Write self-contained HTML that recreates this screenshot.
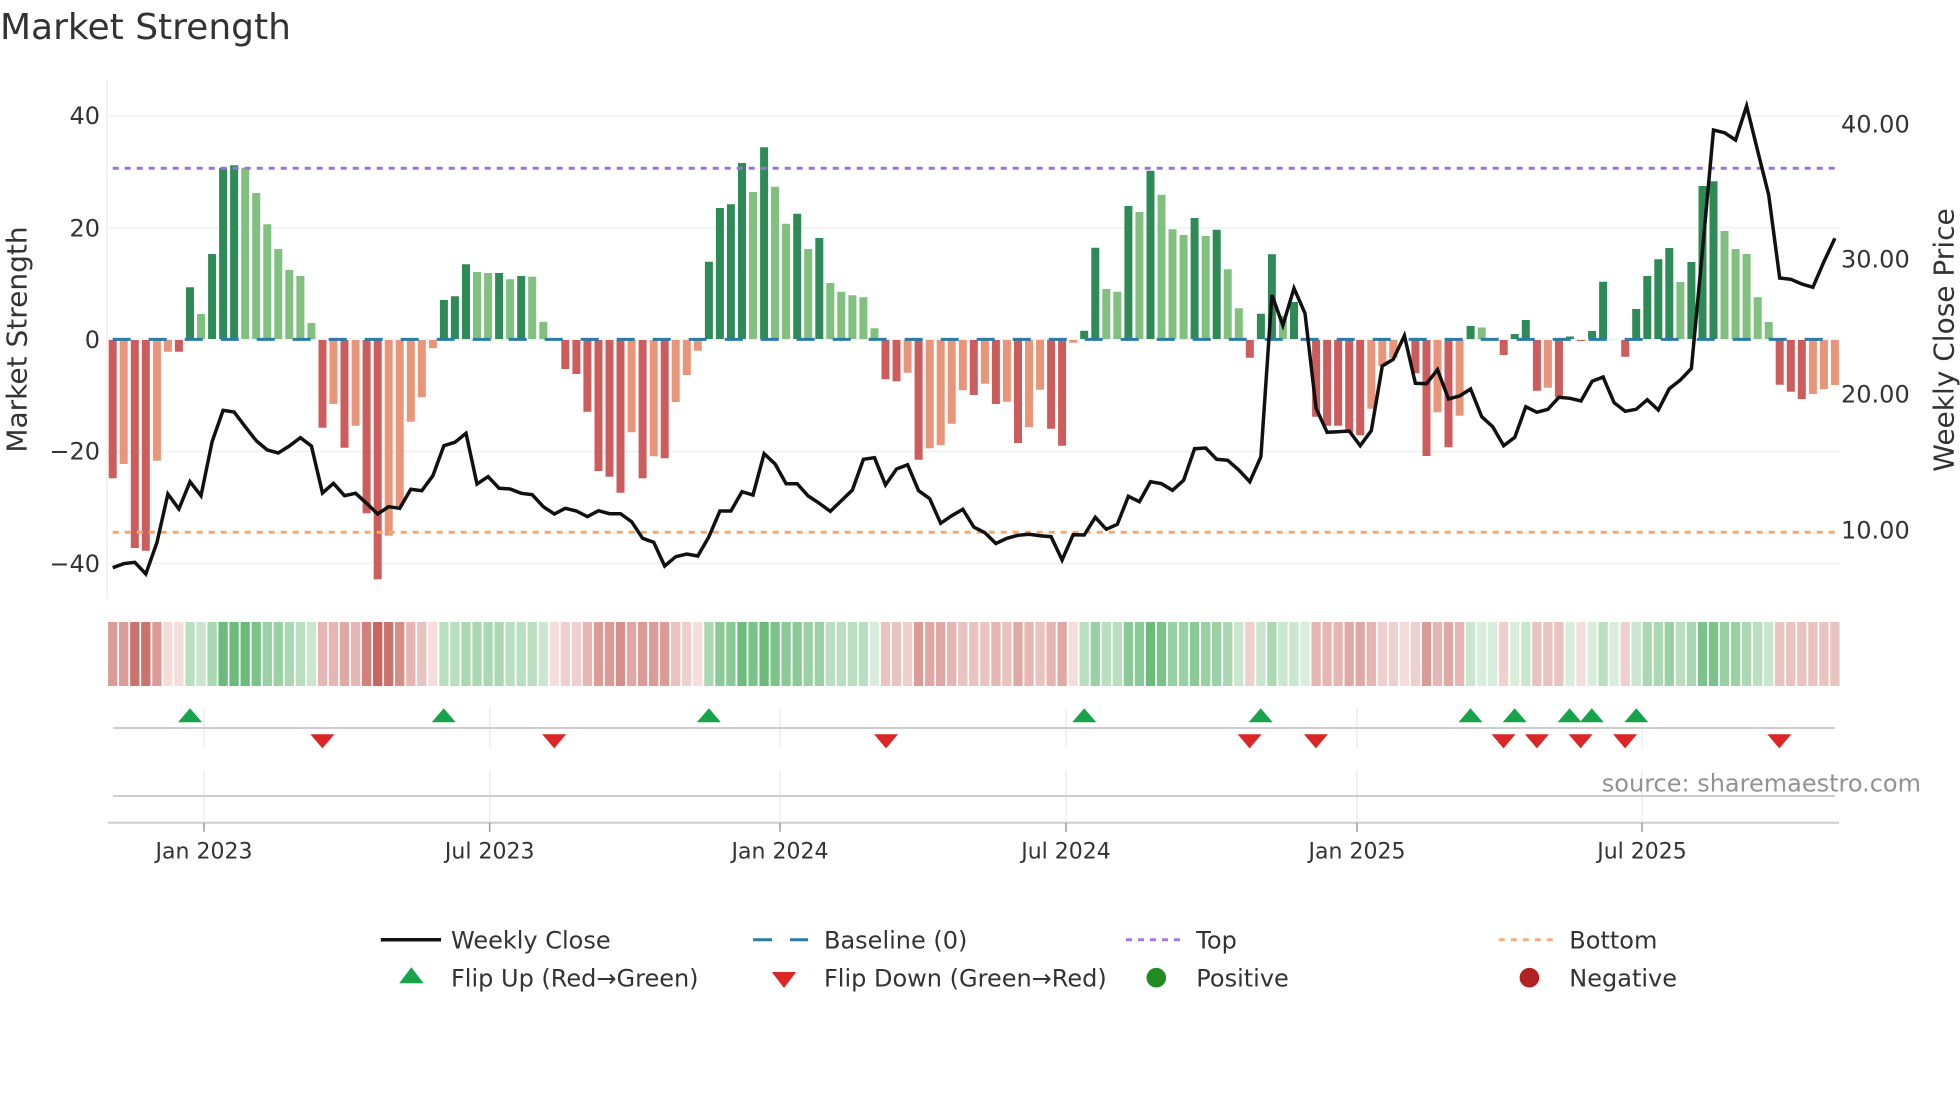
<!DOCTYPE html>
<html lang="en"><head><meta charset="utf-8"><title>Market Strength</title>
<style>
html,body{margin:0;padding:0;background:#fff;width:1960px;height:1102px;overflow:hidden}
svg{display:block;font-family:"DejaVu Sans","Liberation Sans",sans-serif}
text{fill:#333}
.t{font-size:24px}
.x{font-size:22px;text-anchor:middle}
.e{text-anchor:end}
.h path{stroke-width:9.3;fill:none}
.r0,.r1,.r2,.r3,.r4,.r5,.r6,.r7,.r8,.r9{stroke:#c35851}
.g0,.g1,.g2,.g3,.g4,.g5,.g6,.g7,.g8,.g9{stroke:#3da750}
.r0,.g0{stroke-opacity:.2}.r1,.g1{stroke-opacity:.28}.r2,.g2{stroke-opacity:.36}.r3,.g3{stroke-opacity:.44}.r4,.g4{stroke-opacity:.52}
.r5,.g5{stroke-opacity:.6}.r6,.g6{stroke-opacity:.68}.r7,.g7{stroke-opacity:.76}.r8,.g8{stroke-opacity:.84}.r9,.g9{stroke-opacity:.92}
</style></head><body>
<svg width="1960" height="1102" viewBox="0 0 1960 1102" xmlns="http://www.w3.org/2000/svg">
<rect width="1960" height="1102" fill="#fff"/>
<text x="0" y="39" style="font-size:36px">Market Strength</text>

<!-- grid -->
<path d="M107 80V599" stroke="#eeeef0" stroke-width="1.6" fill="none"/>
<path d="M107 115.7H1840M107 227.7H1840M107 339.5H1840M107 451.5H1840M107 563.5H1840" stroke="#f0f1f4" stroke-width="1.7" fill="none"/>

<!-- bars -->
<g fill="none" stroke-width="8">
<path stroke="#2e8b57" d="M190 339V287.3M212.1 339V254M223.1 339V167.7M234.1 339V165.3M443.9 339V300M454.9 339V296.3M466 339V264.3M499.1 339V273M521.2 339V276M708.9 339V261.7M719.9 339V208M730.9 339V204.3M742 339V163M764.1 339V147.3M797.2 339V213.7M819.3 339V238M1084.2 339V330.7M1095.3 339V247.7M1128.4 339V206M1150.5 339V170.7M1194.6 339V218M1216.7 339V229.7M1260.9 339V313.7M1271.9 339V254.3M1294 339V302M1470.6 339V326M1514.8 339V334M1525.8 339V320M1570 339V336.5M1592.1 339V331M1603.1 339V281.7M1636.2 339V309M1647.3 339V276M1658.3 339V259.3M1669.3 339V248M1691.4 339V262M1702.5 339V186M1713.5 339V181.3"/>
<path stroke="#81c07f" d="M201 339V314M245.2 339V167.7M256.2 339V193M267.3 339V224.3M278.3 339V249M289.3 339V270M300.4 339V276M311.4 339V323M477 339V272M488.1 339V273M510.1 339V279.3M532.2 339V276.7M543.3 339V321.7M753 339V192M775.1 339V186.7M786.1 339V223.7M808.2 339V249M830.3 339V283M841.3 339V291.7M852.4 339V295.3M863.4 339V297.3M874.5 339V328.3M1106.3 339V289M1117.3 339V291.7M1139.4 339V212M1161.5 339V194.7M1172.5 339V229.3M1183.6 339V235M1205.7 339V236M1227.7 339V269.3M1238.8 339V308.3M1282.9 339V315.7M1481.7 339V327.5M1680.4 339V282M1724.5 339V231M1735.6 339V249M1746.6 339V254M1757.7 339V297.3M1768.7 339V322"/>
<path stroke="#cd5c5c" d="M112.7 340V478.3M134.8 340V548M145.8 340V550.7M178.9 340V351.7M322.5 340V427.7M344.5 340V447.7M366.6 340V513.3M377.7 340V579.3M565.3 340V369M576.4 340V374M587.4 340V411.7M598.5 340V471M609.5 340V476.7M620.5 340V492.7M642.6 340V478.3M664.7 340V458.3M885.5 340V379.3M896.5 340V381.3M918.6 340V459.7M973.8 340V395M995.9 340V404M1018 340V443M1051.1 340V428.7M1062.1 340V445.7M1249.8 340V357.7M1316.1 340V416.7M1327.1 340V425.7M1338.1 340V425.7M1349.2 340V433M1360.2 340V435.3M1415.4 340V373.3M1426.5 340V456M1448.5 340V447.3M1503.7 340V355M1536.9 340V390.7M1558.9 340V397.3M1581 340V341M1625.2 340V356.7M1779.7 340V384.7M1790.8 340V391.7M1801.8 340V399"/>
<path stroke="#e8957a" d="M123.7 340V464M156.9 340V460.7M167.9 340V351.7M333.5 340V404M355.6 340V425.7M388.7 340V535.7M399.7 340V506M410.8 340V421.7M421.8 340V397.3M432.9 340V348.3M631.6 340V432.3M653.7 340V456.3M675.7 340V402M686.8 340V375M697.8 340V350.7M907.6 340V372.7M929.7 340V448.3M940.7 340V445.3M951.7 340V423.7M962.8 340V390.3M984.9 340V383.7M1006.9 340V401.7M1029 340V427.3M1040.1 340V389.7M1073.2 340V342.7M1371.3 340V408.7M1382.3 340V366M1393.3 340V358M1437.5 340V412.3M1459.6 340V415.7M1547.9 340V387.7M1812.9 340V394M1823.9 340V389M1834.9 340V385"/>
</g>

<!-- reference lines -->
<g fill="none" stroke-width="3">
<path d="M112.7 339.4H1835" stroke="#2a7ba8" stroke-dasharray="18 18"/>
<path d="M112.7 168.3H1835" stroke="#9b72d9" stroke-dasharray="6 6"/>
<path d="M112.7 532.3H1835" stroke="#f2a96b" stroke-dasharray="6 6"/>
</g>

<!-- weekly close -->
<polyline fill="none" stroke="#111" stroke-width="3.5" stroke-linejoin="miter" stroke-miterlimit="4" points="112.7,567.7 123.7,563.7 134.8,562.3 145.8,574 156.9,542.7 167.9,494 178.9,509 190,481.7 201,495.7 212.1,441.7 223.1,410.3 234.1,412 245.2,426.7 256.2,440.7 267.3,450 278.3,453 289.3,446 300.4,437.7 311.4,446 322.5,493 333.5,483.3 344.5,495.7 355.6,493.3 366.6,503.3 377.7,514 388.7,506.7 399.7,508.3 410.8,489.3 421.8,490.7 432.9,475.7 443.9,445.7 454.9,442.3 466,433.3 477,484 488.1,476.7 499.1,488.3 510.1,489 521.2,493.3 532.2,494.7 543.3,506.7 554.3,514 565.3,508.3 576.4,511 587.4,516.7 598.5,510.7 609.5,513.7 620.5,513.7 631.6,521.7 642.6,538.3 653.7,542.3 664.7,566 675.7,556.7 686.8,554 697.8,556 708.9,536.7 719.9,511 730.9,511 742,491.7 753,495 764.1,453.7 775.1,464 786.1,483.7 797.2,483.7 808.2,496 819.3,503.3 830.3,511.3 841.3,500.7 852.4,490 863.4,459.3 874.5,457.7 885.5,485 896.5,469 907.6,464.7 918.6,490.7 929.7,498.7 940.7,523.3 951.7,515.7 962.8,509.3 973.8,527 984.9,532.7 995.9,543.5 1006.9,538.3 1018,535.3 1029,534.3 1040.1,535.7 1051.1,536.7 1062.1,560 1073.2,534.7 1084.2,535 1095.3,517.3 1106.3,529.3 1117.3,524.3 1128.4,496.3 1139.4,501.7 1150.5,481.7 1161.5,483.7 1172.5,490.3 1183.6,480.3 1194.6,448.7 1205.7,448 1216.7,459.3 1227.7,460.3 1238.8,470 1249.8,481.7 1260.9,456.7 1271.9,295 1282.9,325.3 1294,288.3 1305,313.3 1316.1,408.3 1327.1,432.3 1338.1,431.7 1349.2,431 1360.2,445.7 1371.3,430.7 1382.3,366 1393.3,359.3 1404.4,335.7 1415.4,383.3 1426.5,383.7 1437.5,369.7 1448.5,399 1459.6,396 1470.6,389 1481.7,416.7 1492.7,426.7 1503.7,445.7 1514.8,437.3 1525.8,406.7 1536.9,412.3 1547.9,409.3 1558.9,397.3 1570,398.3 1581,401 1592.1,381.3 1603.1,377 1614.1,402.7 1625.2,411.3 1636.2,409.3 1647.3,399.7 1658.3,410 1669.3,388.7 1680.4,380 1691.4,368.5 1702.5,250 1713.5,130 1724.5,132.7 1735.6,140 1746.6,106 1757.7,151 1768.7,195 1779.7,278 1790.8,279.3 1801.8,284 1812.9,287.3 1823.9,261.7 1834.9,238.3"/>

<!-- y axis labels -->
<text class="t e" x="100" y="124">40</text>
<text class="t e" x="100" y="236.7">20</text>
<text class="t e" x="100" y="348">0</text>
<text class="t e" x="100" y="459.3">−20</text>
<text class="t e" x="100" y="572">−40</text>
<text class="t" x="1841" y="132.7">40.00</text>
<text class="t" x="1841" y="267.7">30.00</text>
<text class="t" x="1841" y="402.7">20.00</text>
<text class="t" x="1841" y="538.3">10.00</text>
<text transform="translate(26.7 339.5) rotate(-90)" text-anchor="middle" style="font-size:28px">Market Strength</text>
<text transform="translate(1953.3 340) rotate(-90)" text-anchor="middle" style="font-size:28px">Weekly Close Price</text>

<!-- heat strip -->
<g class="h">
<path class="r5" d="M112.7 622v64"/><path class="r5" d="M123.7 622v64"/><path class="r8" d="M134.8 622v64"/><path class="r8" d="M145.8 622v64"/><path class="r5" d="M156.9 622v64"/><path class="r0" d="M167.9 622v64"/><path class="r0" d="M178.9 622v64"/><path class="g2" d="M190 622v64"/><path class="g1" d="M201 622v64"/><path class="g3" d="M212.1 622v64"/><path class="g7" d="M223.1 622v64"/><path class="g7" d="M234.1 622v64"/><path class="g7" d="M245.2 622v64"/><path class="g6" d="M256.2 622v64"/><path class="g4" d="M267.3 622v64"/><path class="g4" d="M278.3 622v64"/><path class="g3" d="M289.3 622v64"/><path class="g2" d="M300.4 622v64"/><path class="g1" d="M311.4 622v64"/><path class="r3" d="M322.5 622v64"/><path class="r3" d="M333.5 622v64"/><path class="r4" d="M344.5 622v64"/><path class="r3" d="M355.6 622v64"/><path class="r7" d="M366.6 622v64"/><path class="r9" d="M377.7 622v64"/><path class="r8" d="M388.7 622v64"/><path class="r6" d="M399.7 622v64"/><path class="r3" d="M410.8 622v64"/><path class="r2" d="M421.8 622v64"/><path class="r0" d="M432.9 622v64"/><path class="g2" d="M443.9 622v64"/><path class="g2" d="M454.9 622v64"/><path class="g3" d="M466 622v64"/><path class="g3" d="M477 622v64"/><path class="g3" d="M488.1 622v64"/><path class="g3" d="M499.1 622v64"/><path class="g2" d="M510.1 622v64"/><path class="g2" d="M521.2 622v64"/><path class="g2" d="M532.2 622v64"/><path class="g1" d="M543.3 622v64"/><path class="r0" d="M554.3 622v64"/><path class="r1" d="M565.3 622v64"/><path class="r1" d="M576.4 622v64"/><path class="r3" d="M587.4 622v64"/><path class="r5" d="M598.5 622v64"/><path class="r5" d="M609.5 622v64"/><path class="r6" d="M620.5 622v64"/><path class="r4" d="M631.6 622v64"/><path class="r5" d="M642.6 622v64"/><path class="r5" d="M653.7 622v64"/><path class="r5" d="M664.7 622v64"/><path class="r2" d="M675.7 622v64"/><path class="r1" d="M686.8 622v64"/><path class="r0" d="M697.8 622v64"/><path class="g3" d="M708.9 622v64"/><path class="g5" d="M719.9 622v64"/><path class="g5" d="M730.9 622v64"/><path class="g7" d="M742 622v64"/><path class="g6" d="M753 622v64"/><path class="g7" d="M764.1 622v64"/><path class="g6" d="M775.1 622v64"/><path class="g5" d="M786.1 622v64"/><path class="g5" d="M797.2 622v64"/><path class="g4" d="M808.2 622v64"/><path class="g4" d="M819.3 622v64"/><path class="g2" d="M830.3 622v64"/><path class="g2" d="M841.3 622v64"/><path class="g2" d="M852.4 622v64"/><path class="g2" d="M863.4 622v64"/><path class="g0" d="M874.5 622v64"/><path class="r2" d="M885.5 622v64"/><path class="r2" d="M896.5 622v64"/><path class="r1" d="M907.6 622v64"/><path class="r5" d="M918.6 622v64"/><path class="r4" d="M929.7 622v64"/><path class="r4" d="M940.7 622v64"/><path class="r3" d="M951.7 622v64"/><path class="r2" d="M962.8 622v64"/><path class="r2" d="M973.8 622v64"/><path class="r2" d="M984.9 622v64"/><path class="r3" d="M995.9 622v64"/><path class="r2" d="M1006.9 622v64"/><path class="r4" d="M1018 622v64"/><path class="r3" d="M1029 622v64"/><path class="r2" d="M1040.1 622v64"/><path class="r3" d="M1051.1 622v64"/><path class="r4" d="M1062.1 622v64"/><path class="r0" d="M1073.2 622v64"/><path class="g2" d="M1084.2 622v64"/><path class="g4" d="M1095.3 622v64"/><path class="g2" d="M1106.3 622v64"/><path class="g2" d="M1117.3 622v64"/><path class="g5" d="M1128.4 622v64"/><path class="g5" d="M1139.4 622v64"/><path class="g7" d="M1150.5 622v64"/><path class="g6" d="M1161.5 622v64"/><path class="g4" d="M1172.5 622v64"/><path class="g4" d="M1183.6 622v64"/><path class="g5" d="M1194.6 622v64"/><path class="g4" d="M1205.7 622v64"/><path class="g4" d="M1216.7 622v64"/><path class="g3" d="M1227.7 622v64"/><path class="g1" d="M1238.8 622v64"/><path class="r1" d="M1249.8 622v64"/><path class="g1" d="M1260.9 622v64"/><path class="g3" d="M1271.9 622v64"/><path class="g1" d="M1282.9 622v64"/><path class="g1" d="M1294 622v64"/><path class="g0" d="M1305 622v64"/><path class="r3" d="M1316.1 622v64"/><path class="r3" d="M1327.1 622v64"/><path class="r3" d="M1338.1 622v64"/><path class="r4" d="M1349.2 622v64"/><path class="r4" d="M1360.2 622v64"/><path class="r3" d="M1371.3 622v64"/><path class="r1" d="M1382.3 622v64"/><path class="r1" d="M1393.3 622v64"/><path class="r0" d="M1404.4 622v64"/><path class="r1" d="M1415.4 622v64"/><path class="r5" d="M1426.5 622v64"/><path class="r3" d="M1437.5 622v64"/><path class="r4" d="M1448.5 622v64"/><path class="r3" d="M1459.6 622v64"/><path class="g1" d="M1470.6 622v64"/><path class="g0" d="M1481.7 622v64"/><path class="g0" d="M1492.7 622v64"/><path class="r1" d="M1503.7 622v64"/><path class="g0" d="M1514.8 622v64"/><path class="g1" d="M1525.8 622v64"/><path class="r2" d="M1536.9 622v64"/><path class="r2" d="M1547.9 622v64"/><path class="r2" d="M1558.9 622v64"/><path class="g0" d="M1570 622v64"/><path class="r0" d="M1581 622v64"/><path class="g0" d="M1592.1 622v64"/><path class="g2" d="M1603.1 622v64"/><path class="g0" d="M1614.1 622v64"/><path class="r1" d="M1625.2 622v64"/><path class="g1" d="M1636.2 622v64"/><path class="g3" d="M1647.3 622v64"/><path class="g3" d="M1658.3 622v64"/><path class="g4" d="M1669.3 622v64"/><path class="g2" d="M1680.4 622v64"/><path class="g3" d="M1691.4 622v64"/><path class="g6" d="M1702.5 622v64"/><path class="g6" d="M1713.5 622v64"/><path class="g4" d="M1724.5 622v64"/><path class="g4" d="M1735.6 622v64"/><path class="g3" d="M1746.6 622v64"/><path class="g2" d="M1757.7 622v64"/><path class="g1" d="M1768.7 622v64"/><path class="r2" d="M1779.7 622v64"/><path class="r2" d="M1790.8 622v64"/><path class="r2" d="M1801.8 622v64"/><path class="r2" d="M1812.9 622v64"/><path class="r2" d="M1823.9 622v64"/><path class="r2" d="M1834.9 622v64"/>
</g>

<!-- lower panels -->
<path d="M204 708V747.7M489.7 708V747.7M780 708V747.7M1066 708V747.7M1357 708V747.7M1642 708V747.7M204 770V822.7M489.7 770V822.7M780 770V822.7M1066 770V822.7M1357 770V822.7M1642 770V822.7" stroke="#e9ecef" stroke-width="1.4" fill="none"/>
<path d="M113 728H1835M113 796H1835M108 822.7H1839" stroke="#cbcdd0" stroke-width="2" fill="none"/>
<path d="M204 823V831.7M489.7 823V831.7M780 823V831.7M1066 823V831.7M1357 823V831.7M1642 823V831.7" stroke="#999" stroke-width="1.5" fill="none"/>

<g fill="#16a34a">
<path d="M190 708.3l12 13.9h-24zM443.7 708.3l12 13.9h-24zM708.9 708.3l12 13.9h-24zM1084.2 708.3l12 13.9h-24zM1260.7 708.3l12 13.9h-24zM1470.5 708.3l12 13.9h-24zM1514.7 708.3l12 13.9h-24zM1569.6 708.3l12 13.9h-24zM1591.8 708.3l12 13.9h-24zM1636.3 708.3l12 13.9h-24z"/>
</g>
<g fill="#dc2626">
<path d="M322.4 748.4l-12-14.1h24zM554.2 748.4l-12-14.1h24zM886 748.4l-12-14.1h24zM1249.6 748.4l-12-14.1h24zM1315.9 748.4l-12-14.1h24zM1503.5 748.4l-12-14.1h24zM1536.9 748.4l-12-14.1h24zM1580.6 748.4l-12-14.1h24zM1625.1 748.4l-12-14.1h24zM1779.3 748.4l-12-14.1h24z"/>
</g>

<text class="x" x="204" y="858.3">Jan 2023</text>
<text class="x" x="489.7" y="858.3">Jul 2023</text>
<text class="x" x="780" y="858.3">Jan 2024</text>
<text class="x" x="1066" y="858.3">Jul 2024</text>
<text class="x" x="1357" y="858.3">Jan 2025</text>
<text class="x" x="1642" y="858.3">Jul 2025</text>

<text x="1921" y="791.7" text-anchor="end" style="font-size:24px;fill:#929292">source: sharemaestro.com</text>

<!-- legend -->
<path d="M380.8 939.7H441" stroke="#111" stroke-width="3.5" fill="none"/>
<path d="M753 939.7H808" stroke="#2a7ba8" stroke-width="3" stroke-dasharray="19 18" fill="none"/>
<path d="M1126 939.7H1181.5" stroke="#a678e2" stroke-width="3" stroke-dasharray="6 6" fill="none"/>
<path d="M1498.8 939.7H1554" stroke="#f0b081" stroke-width="3" stroke-dasharray="6 6" fill="none"/>
<path d="M411.4 967.3l12.2 16h-24.4z" fill="#16a34a"/>
<path d="M784 988l-12.2-16h24.4z" fill="#dc2626"/>
<circle cx="1156.3" cy="977.7" r="9.8" fill="#228b22"/>
<circle cx="1529.4" cy="977.7" r="9.8" fill="#b22222"/>
<text class="t" x="451" y="948.6">Weekly Close</text>
<text class="t" x="824" y="948.6">Baseline (0)</text>
<text class="t" x="1196.3" y="948.6">Top</text>
<text class="t" x="1569.3" y="948.6">Bottom</text>
<text class="t" x="451" y="986.6">Flip Up (Red→Green)</text>
<text class="t" x="824" y="986.6">Flip Down (Green→Red)</text>
<text class="t" x="1196.3" y="986.6">Positive</text>
<text class="t" x="1569.3" y="986.6">Negative</text>
</svg>
</body></html>
